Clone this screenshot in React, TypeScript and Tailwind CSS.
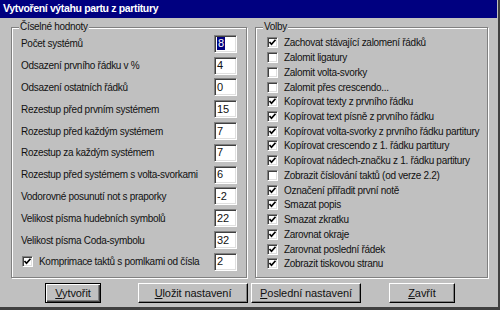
const numericRows: { label: string; value: string; checkbox?: boolean; selected?: boolean }[] = [
  { label: "Počet systémů", value: "8", selected: true },
  { label: "Odsazení prvního řádku v %", value: "4" },
  { label: "Odsazení ostatních řádků", value: "0" },
  { label: "Rezestup před prvním systémem", value: "15" },
  { label: "Rozestup před každým systémem", value: "7" },
  { label: "Rozestup za každým systémem", value: "7" },
  { label: "Rozestup před systémem s volta-svorkami", value: "6" },
  { label: "Vodorovné posunutí not s praporky", value: "-2" },
  { label: "Velikost písma hudebních symbolů", value: "22" },
  { label: "Velikost písma Coda-symbolu", value: "32" },
  { label: "Komprimace taktů s pomlkami od čísla", value: "2", checkbox: true },
];

const options: [string, boolean][] = [
  ["Zachovat stávající zalomení řádků", true],
  ["Zalomit ligatury", false],
  ["Zalomit volta-svorky", false],
  ["Zalomit přes crescendo...", false],
  ["Kopírovat texty z prvního řádku", true],
  ["Kopírovat text písně z prvního řádku", true],
  ["Kopírovat volta-svorky z prvního řádku partitury", true],
  ["Kopírovat crescendo z 1. řádku partitury", true],
  ["Kopírovat nádech-značku z 1. řádku partitury", true],
  ["Zobrazit číslování taktů (od verze 2.2)", false],
  ["Označení přiřadit první notě", true],
  ["Smazat popis", true],
  ["Smazat zkratku", true],
  ["Zarovnat okraje", true],
  ["Zarovnat poslední řádek", true],
  ["Zobrazit tiskovou stranu", true],
];

function CheckBox({ checked }: { checked: boolean }) {
  return (
    <span className="w-[11px] h-[11px] shrink-0 bg-white border border-t-[#808080] border-l-[#808080] border-r-white border-b-white shadow-[inset_1px_1px_0_#404040,inset_-1px_-1px_0_#dfdfdf] flex items-center justify-center">
      {checked && (
        <svg width="9" height="9" viewBox="0 0 9 9">
          <polyline points="1.5,4 3.5,6.2 7.5,1.8" fill="none" stroke="#000" strokeWidth="1.7" />
        </svg>
      )}
    </span>
  );
}

function Group({ title, className, children }: { title: string; className: string; children: React.ReactNode }) {
  return (
    <div className={`relative border border-[#808080] shadow-[inset_1px_1px_0_#fff,1px_1px_0_#fff] ${className}`}>
      <span className="absolute -top-[8px] left-[7px] px-[1px] bg-[#c0c0c0] leading-[14px]">{title}</span>
      {children}
    </div>
  );
}

function Button({ label, className, isDefault }: { label: string; className: string; isDefault?: boolean }) {
  return (
    <button
      type="button"
      className={`h-[20px] flex items-center justify-center border text-[11px] tracking-[-0.1px] ${
        isDefault
          ? "border-black shadow-[inset_1px_1px_0_#fff,inset_-1px_-1px_0_#404040,inset_-2px_-2px_0_#808080]"
          : "border-t-white border-l-white border-r-[#000] border-b-[#000] shadow-[inset_-1px_-1px_0_#808080]"
      } ${className}`}
    >
      <span>
        <span className="underline underline-offset-[1px]">{label[0]}</span>
        {label.slice(1)}
      </span>
    </button>
  );
}

export default function App() {
  return (
    <div className="w-[500px] h-[310px] bg-[#c0c0c0] border-r-2 border-b-[3px] border-[#404040] flex flex-col text-[10px] tracking-[-0.3px] whitespace-nowrap text-[#111] font-['Liberation_Sans',Arial,sans-serif] overflow-hidden">
      <div className="h-[18px] mr-px bg-[#000080] text-white font-bold text-[10.5px] tracking-[-0.35px] pl-[3px] flex items-center">
        Vytvoření výtahu partu z partitury
      </div>

      <div className="flex gap-[8px] pl-[11px] pt-[9px]">
        <Group title="Číselné hodnoty" className="w-[236px] h-[251px] pt-[5px] pl-[9px] pr-[9px]">
          {numericRows.map((row) => (
            <div key={row.label} className="h-[21.8px] flex items-center">
              {row.checkbox && (
                <span className="mr-[6px] ml-[1px]">
                  <CheckBox checked />
                </span>
              )}
              <span>{row.label}</span>
              <span className="ml-auto w-[23px] h-[18px] bg-white border border-t-[#808080] border-l-[#808080] border-r-white border-b-white shadow-[inset_1px_1px_0_#404040,inset_-1px_-1px_0_#dfdfdf] flex items-center pl-[2px] leading-[13px] text-[11px] tracking-normal">
                {row.selected ? <span className="bg-[#000080] text-white px-[1px]">{row.value}</span> : row.value}
              </span>
            </div>
          ))}
        </Group>

        <Group title="Volby" className="w-[233px] h-[251px] pt-[7.6px] pl-[11px]">
          {options.map(([label, checked]) => (
            <div key={label} className="h-[14.73px] flex items-center gap-[6px]">
              <CheckBox checked={checked} />
              <span>{label}</span>
            </div>
          ))}
        </Group>
      </div>

      <div className="flex pt-[5px]">
        <Button label="Vytvořit" isDefault className="ml-[45px] w-[56px]" />
        <Button label="Uložit nastavení" className="ml-[37px] w-[110px]" />
        <Button label="Poslední nastavení" className="ml-[3px] w-[110px]" />
        <Button label="Zavřít" className="ml-[28px] w-[66px]" />
      </div>
    </div>
  );
}
